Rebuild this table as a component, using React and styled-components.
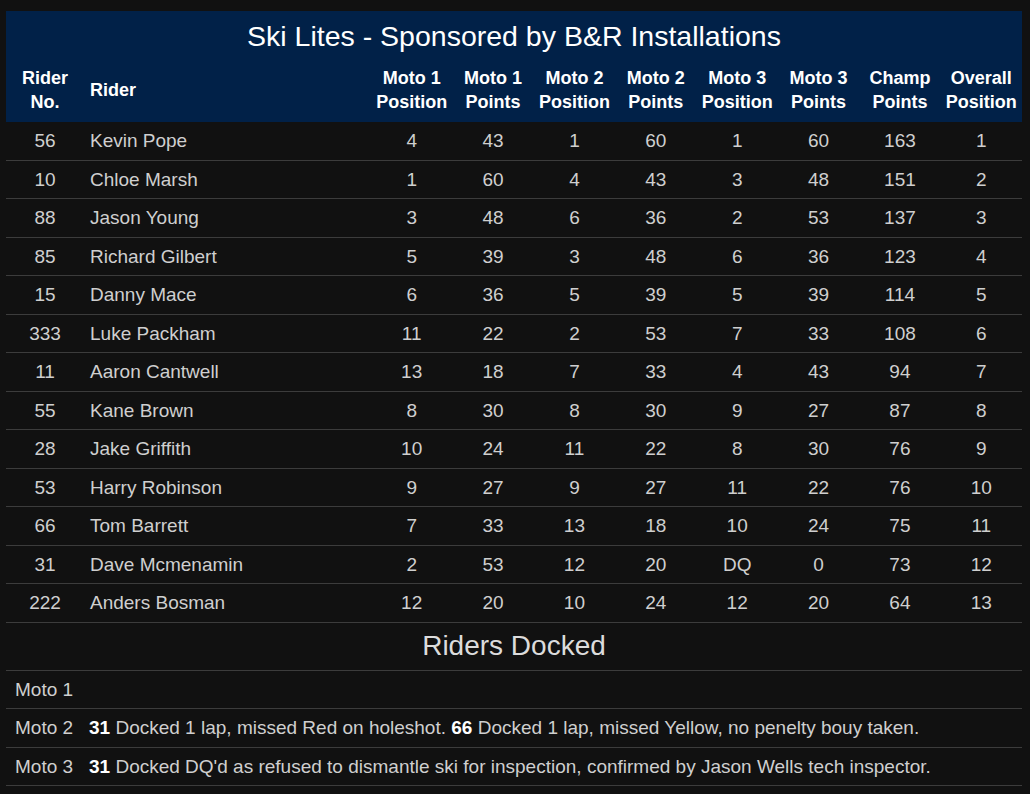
import React from "react";
import styled, { createGlobalStyle } from "styled-components";

const GlobalStyle = createGlobalStyle`
  html, body {
    margin: 0;
    background: #111111;
  }
  body {
    font-family: "Liberation Sans", Arial, sans-serif;
  }
`;

const riders = [
  ["56", "Kevin Pope", "4", "43", "1", "60", "1", "60", "163", "1"],
  ["10", "Chloe Marsh", "1", "60", "4", "43", "3", "48", "151", "2"],
  ["88", "Jason Young", "3", "48", "6", "36", "2", "53", "137", "3"],
  ["85", "Richard Gilbert", "5", "39", "3", "48", "6", "36", "123", "4"],
  ["15", "Danny Mace", "6", "36", "5", "39", "5", "39", "114", "5"],
  ["333", "Luke Packham", "11", "22", "2", "53", "7", "33", "108", "6"],
  ["11", "Aaron Cantwell", "13", "18", "7", "33", "4", "43", "94", "7"],
  ["55", "Kane Brown", "8", "30", "8", "30", "9", "27", "87", "8"],
  ["28", "Jake Griffith", "10", "24", "11", "22", "8", "30", "76", "9"],
  ["53", "Harry Robinson", "9", "27", "9", "27", "11", "22", "76", "10"],
  ["66", "Tom Barrett", "7", "33", "13", "18", "10", "24", "75", "11"],
  ["31", "Dave Mcmenamin", "2", "53", "12", "20", "DQ", "0", "73", "12"],
  ["222", "Anders Bosman", "12", "20", "10", "24", "12", "20", "64", "13"],
];

const headers = [
  ["Moto 1", "Position"],
  ["Moto 1", "Points"],
  ["Moto 2", "Position"],
  ["Moto 2", "Points"],
  ["Moto 3", "Position"],
  ["Moto 3", "Points"],
  ["Champ", "Points"],
  ["Overall", "Position"],
];

const Page = styled.div`
  padding: 11px 8px 8px 6px;
`;

const Table = styled.table`
  width: 1016px;
  border-collapse: collapse;
  table-layout: fixed;
  color: #cfcfcf;
  font-size: 19px;
`;

const Head = styled.thead`
  background: #012148;
  color: #ffffff;
`;

const Title = styled.th`
  font-size: 28.5px;
  font-weight: normal;
  text-align: center;
  padding: 8px 0 7px;
  line-height: 34px;
`;

const HeadCell = styled.th`
  font-size: 18px;
  font-weight: bold;
  line-height: 24px;
  padding: 6px 0 8px;
  text-align: ${(p) => (p.$left ? "left" : "center")};
  padding-left: ${(p) => (p.$left ? "6px" : "0")};
  vertical-align: middle;
`;

const Row = styled.tr`
  border-bottom: 1px solid #3c3c3c;
`;

const Cell = styled.td`
  padding: 8px 0;
  line-height: 21.5px;
  text-align: ${(p) => (p.$left ? "left" : "center")};
  padding-left: ${(p) => (p.$left ? "6px" : "0")};
  white-space: nowrap;
`;

const SubTitle = styled.th`
  font-size: 28px;
  font-weight: normal;
  color: #dcdcdc;
  text-align: center;
  padding: 7px 0 8px;
  line-height: 32px;
`;

const DockTable = styled.table`
  width: 1016px;
  border-collapse: collapse;
  table-layout: fixed;
  color: #cfcfcf;
  font-size: 19px;
`;

const Label = styled.td`
  width: 78px;
  white-space: nowrap;
  padding: 8px 0 8px 9px;
  line-height: 21.5px;
`;

const Note = styled.td`
  padding: 8px 0 8px 5px;
  line-height: 21.5px;
  white-space: nowrap;
  b {
    color: #ffffff;
  }
`;

export default function App() {
  return (
    <Page>
      <GlobalStyle />
      <Table>
        <colgroup>
          <col style={{ width: 78 }} />
          <col style={{ width: 287 }} />
          {headers.map((_, i) => (
            <col key={i} />
          ))}
        </colgroup>
        <Head>
          <tr>
            <Title colSpan={10}>Ski Lites - Sponsored by B&amp;R Installations</Title>
          </tr>
          <tr>
            <HeadCell>
              Rider
              <br />
              No.
            </HeadCell>
            <HeadCell $left>Rider</HeadCell>
            {headers.map(([a, b], i) => (
              <HeadCell key={i}>
                {a}
                <br />
                {b}
              </HeadCell>
            ))}
          </tr>
        </Head>
        <tbody>
          {riders.map((r) => (
            <Row key={r[0]}>
              {r.map((v, i) => (
                <Cell key={i} $left={i === 1}>
                  {v}
                </Cell>
              ))}
            </Row>
          ))}
        </tbody>
      </Table>
      <DockTable>
        <colgroup>
          <col style={{ width: 78 }} />
          <col />
        </colgroup>
        <thead>
          <Row>
            <SubTitle colSpan={2}>Riders Docked</SubTitle>
          </Row>
        </thead>
        <tbody>
          <Row>
            <Label>Moto 1</Label>
            <Note></Note>
          </Row>
          <Row>
            <Label>Moto 2</Label>
            <Note>
              <b>31</b> Docked 1 lap, missed Red on holeshot. <b>66</b> Docked 1
              lap, missed Yellow, no penelty bouy taken.
            </Note>
          </Row>
          <Row>
            <Label>Moto 3</Label>
            <Note>
              <b>31</b> Docked DQ'd as refused to dismantle ski for inspection,
              confirmed by Jason Wells tech inspector.
            </Note>
          </Row>
        </tbody>
      </DockTable>
    </Page>
  );
}
